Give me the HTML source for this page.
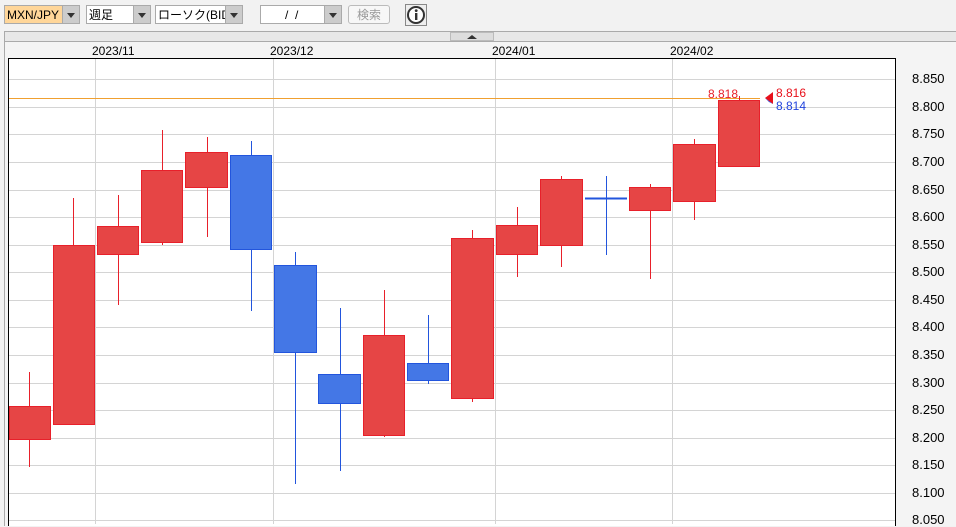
<!DOCTYPE html>
<html><head><meta charset="utf-8"><style>
body{margin:0;width:956px;height:526px;background:#f2f2f2;font-family:"Liberation Sans","Noto Sans CJK JP",sans-serif;position:relative;overflow:hidden}
.ab{position:absolute}
.sel{position:absolute;top:5px;height:19px;border:1px solid #aaa;background:#fff;font-size:12px;line-height:19px;box-sizing:border-box}
.sel .ar{position:absolute;right:0;top:0;width:16px;height:17px;background:#ccc;border-left:1px solid #aaa}
.sel .ar:after{content:"";position:absolute;left:4px;top:7px;border-left:4px solid transparent;border-right:4px solid transparent;border-top:5px solid #333}
.yl{position:absolute;left:912px;font-size:13px;color:#000}
</style></head><body>
<div class="sel" style="left:4px;width:76px;background:#ffd699"><span style="padding-left:2px">MXN/JPY</span><div class="ar"></div></div>
<div class="sel" style="left:86px;width:65px"><span style="padding-left:2px">週足</span><div class="ar"></div></div>
<div class="sel" style="left:155px;width:88px"><span style="padding-left:2px">ローソク(BID)</span><div class="ar"></div></div>
<div class="sel" style="left:260px;width:82px"><span style="padding-left:24px">/ &nbsp;/</span><div class="ar"></div></div>
<div class="ab" style="left:348px;top:5px;width:42px;height:19px;border:1px solid #bbb;border-radius:3px;background:#f7f7f7;color:#999;font-size:12px;line-height:19px;text-align:center;box-sizing:border-box">検索</div>
<div class="ab" style="left:405px;top:4px;width:22px;height:22px;border:1px solid #888;background:#eee;box-sizing:border-box">
<svg width="20" height="20" viewBox="0 0 20 20"><circle cx="10" cy="10" r="8" fill="#fff" stroke="#333" stroke-width="2"/><rect x="9" y="8" width="2.4" height="7" fill="#333"/><circle cx="10.2" cy="5.6" r="1.4" fill="#333"/></svg></div>
<div class="ab" style="left:4px;top:31px;width:952px;height:11px;border:1px solid #aaa;border-right:none;background:#e8e8e8;box-sizing:border-box"></div>
<div class="ab" style="left:450px;top:32px;width:44px;height:9px;background:#ddd;border:1px solid #bbb;box-sizing:border-box"><div style="margin:2px auto 0;width:0;height:0;border-left:5px solid transparent;border-right:5px solid transparent;border-bottom:4px solid #333"></div></div>
<div class="ab" style="left:4px;top:42px;width:952px;height:484px;background:#f4f4f4;border-left:1px solid #aaa"></div>
<div class="ab" style="left:92px;top:44px;font-size:12px">2023/11</div>
<div class="ab" style="left:270px;top:44px;font-size:12px">2023/12</div>
<div class="ab" style="left:492px;top:44px;font-size:12px">2024/01</div>
<div class="ab" style="left:670px;top:44px;font-size:12px">2024/02</div>
<svg class="ab" style="left:0;top:0" width="956" height="526">
<rect x="8.5" y="58.5" width="887" height="470" fill="#fff" stroke="#000"/>
<g stroke="#d4d4d4">
<line x1="9" x2="895" y1="79.5" y2="79.5"/><line x1="9" x2="895" y1="107.5" y2="107.5"/><line x1="9" x2="895" y1="134.5" y2="134.5"/><line x1="9" x2="895" y1="162.5" y2="162.5"/><line x1="9" x2="895" y1="190.5" y2="190.5"/><line x1="9" x2="895" y1="217.5" y2="217.5"/><line x1="9" x2="895" y1="245.5" y2="245.5"/><line x1="9" x2="895" y1="272.5" y2="272.5"/><line x1="9" x2="895" y1="300.5" y2="300.5"/><line x1="9" x2="895" y1="327.5" y2="327.5"/><line x1="9" x2="895" y1="355.5" y2="355.5"/><line x1="9" x2="895" y1="383.5" y2="383.5"/><line x1="9" x2="895" y1="410.5" y2="410.5"/><line x1="9" x2="895" y1="438.5" y2="438.5"/><line x1="9" x2="895" y1="465.5" y2="465.5"/><line x1="9" x2="895" y1="493.5" y2="493.5"/><line x1="9" x2="895" y1="520.5" y2="520.5"/>
<line x1="95.5" x2="95.5" y1="59" y2="524"/><line x1="273.5" x2="273.5" y1="59" y2="524"/><line x1="495.5" x2="495.5" y1="59" y2="524"/><line x1="672.5" x2="672.5" y1="59" y2="524"/>
</g>
<line x1="9" x2="760" y1="98.5" y2="98.5" stroke="#f0a030"/>
<g stroke="#e8202a" fill="#e64545">
<line x1="29.5" x2="29.5" y1="372" y2="467"/><rect x="9.5" y="406.5" width="41" height="33"/>
<line x1="73.5" x2="73.5" y1="198" y2="424"/><rect x="53.5" y="245.5" width="41" height="179"/>
<line x1="118.5" x2="118.5" y1="195" y2="305"/><rect x="97.5" y="226.5" width="41" height="28"/>
<line x1="162.5" x2="162.5" y1="130" y2="245"/><rect x="141.5" y="170.5" width="41" height="72"/>
<line x1="207.5" x2="207.5" y1="137" y2="237"/><rect x="185.5" y="152.5" width="42" height="35"/>
<line x1="384.5" x2="384.5" y1="290" y2="437"/><rect x="363.5" y="335.5" width="41" height="100"/>
<line x1="472.5" x2="472.5" y1="230" y2="402"/><rect x="451.5" y="238.5" width="42" height="160"/>
<line x1="517.5" x2="517.5" y1="207" y2="277"/><rect x="496.5" y="225.5" width="41" height="29"/>
<line x1="561.5" x2="561.5" y1="176" y2="267"/><rect x="540.5" y="179.5" width="42" height="66"/>
<line x1="650.5" x2="650.5" y1="184" y2="279"/><rect x="629.5" y="187.5" width="41" height="23"/>
<line x1="694.5" x2="694.5" y1="139" y2="220"/><rect x="673.5" y="144.5" width="42" height="57"/>
<line x1="739.5" x2="739.5" y1="96" y2="166"/><rect x="718.5" y="100.5" width="41" height="66"/>
</g>
<g stroke="#2255dd" fill="#4477e6">
<line x1="251.5" x2="251.5" y1="141" y2="311"/><rect x="230.5" y="155.5" width="41" height="94"/>
<line x1="295.5" x2="295.5" y1="252" y2="484"/><rect x="274.5" y="265.5" width="42" height="87"/>
<line x1="340.5" x2="340.5" y1="308" y2="471"/><rect x="318.5" y="374.5" width="42" height="29"/>
<line x1="428.5" x2="428.5" y1="315" y2="384"/><rect x="407.5" y="363.5" width="41" height="17"/>
<line x1="606.5" x2="606.5" y1="176" y2="255"/><line x1="585" x2="627" y1="198.5" y2="198.5" stroke-width="2"/>
</g>
<polygon points="765,98 773,92 773,104" fill="#e8101a"/>
<polygon points="765,98 769,102 773,104" fill="#2244dd"/>
<text x="708" y="98" font-size="12" fill="#e8202a" font-family="Liberation Sans">8.818</text>
<text x="776" y="97" font-size="12" fill="#e8101a" font-family="Liberation Sans">8.816</text>
<text x="776" y="110" font-size="12" fill="#2244dd" font-family="Liberation Sans">8.814</text>
</svg>
<div class="yl" style="top:71px">8.850</div><div class="yl" style="top:99px">8.800</div><div class="yl" style="top:126px">8.750</div><div class="yl" style="top:154px">8.700</div><div class="yl" style="top:182px">8.650</div><div class="yl" style="top:209px">8.600</div><div class="yl" style="top:237px">8.550</div><div class="yl" style="top:264px">8.500</div><div class="yl" style="top:292px">8.450</div><div class="yl" style="top:319px">8.400</div><div class="yl" style="top:347px">8.350</div><div class="yl" style="top:375px">8.300</div><div class="yl" style="top:402px">8.250</div><div class="yl" style="top:430px">8.200</div><div class="yl" style="top:457px">8.150</div><div class="yl" style="top:485px">8.100</div><div class="yl" style="top:512px">8.050</div>
</body></html>
